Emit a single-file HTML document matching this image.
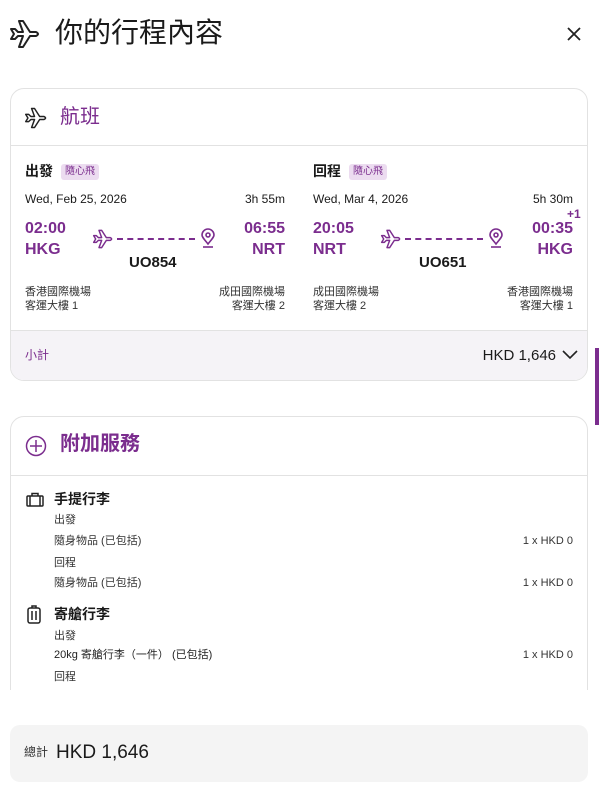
<!DOCTYPE html>
<html><head><meta charset="utf-8"><style>
*{margin:0;padding:0;box-sizing:border-box}
body{width:600px;height:787px;background:#fff;position:relative;overflow:hidden;font-family:"Liberation Sans","Noto Sans CJK TC",sans-serif;color:#1a1a1a}
.a{position:absolute;white-space:nowrap;line-height:1}
.p{color:#7b2d8e}
.card{position:absolute;left:10px;width:578px;border:1px solid #e2e2e2;border-radius:14px;background:#fff;overflow:hidden}
.badge{position:absolute;background:#ecdcf0;color:#7b2d8e;font-size:10px;padding:3px 4px;border-radius:3px;line-height:1}
.r{text-align:right}
</style></head><body>
<svg class="a" style="left:9px;top:19px" width="32" height="30" viewBox="0 0 32 30" fill="none" stroke="#222" stroke-width="2" stroke-linejoin="round"><path d="M2 10 L6 10 L9 13 L14 13 L10 2 L14 2 L21 13 L27 13 Q31 15 27 17 L21 17 L14 28 L10 28 L14 17 L9 17 L6 20 L2 20 L5 15 Z"/></svg>
<div class="a" style="left:55px;top:19px;font-size:28px">你的行程內容</div>
<svg class="a" style="left:567px;top:27px" width="14" height="14" stroke="#222" stroke-width="1.8"><path d="M1 1L13 13M13 1L1 13"/></svg>

<div class="card" style="top:88px;height:293px">
 <svg class="a" style="left:13px;top:18px" width="24" height="22" viewBox="0 0 32 30" fill="none" stroke="#222" stroke-width="2" stroke-linejoin="round"><path d="M2 10 L6 10 L9 13 L14 13 L10 2 L14 2 L21 13 L27 13 Q31 15 27 17 L21 17 L14 28 L10 28 L14 17 L9 17 L6 20 L2 20 L5 15 Z"/></svg>
 <div class="a p" style="left:49px;top:18px;font-size:20px">航班</div>
 <div class="a" style="left:0;top:56px;width:578px;height:1px;background:#e2e2e2"></div>

 <div class="a" style="left:14px;top:75px;font-size:14px;font-weight:bold">出發</div>
 <div class="badge" style="left:50px;top:75px">隨心飛</div>
 <div class="a" style="left:14px;top:104px;font-size:12px">Wed, Feb 25, 2026</div>
 <div class="a r" style="left:214px;width:60px;top:104px;font-size:12px">3h 55m</div>
 <div class="a p" style="left:14px;top:132px;font-size:16px;font-weight:bold">02:00</div>
 <div class="a p" style="left:14px;top:153px;font-size:16px;font-weight:bold">HKG</div>
 <div class="a p r" style="left:214px;width:60px;top:132px;font-size:16px;font-weight:bold">06:55</div>
 <div class="a p r" style="left:214px;width:60px;top:153px;font-size:16px;font-weight:bold">NRT</div>
 <svg class="a" style="left:81px;top:140px" width="22" height="20" viewBox="0 0 32 30" fill="none" stroke="#7b2d8e" stroke-width="2.2" stroke-linejoin="round"><path d="M2 10 L6 10 L9 13 L14 13 L10 2 L14 2 L21 13 L27 13 Q31 15 27 17 L21 17 L14 28 L10 28 L14 17 L9 17 L6 20 L2 20 L5 15 Z"/></svg>
 <div class="a" style="left:106px;top:149px;width:78px;border-top:2px dashed #7b2d8e"></div>
 <svg class="a" style="left:189px;top:139px" width="16" height="22" viewBox="0 0 16 22" fill="none" stroke="#7b2d8e" stroke-width="1.6"><path d="M8 16C4 11 2 9 2 7A6 6 0 0 1 14 7C14 9 12 11 8 16Z"/><circle cx="8" cy="7" r="2"/><path d="M3 19H13"/></svg>
 <div class="a" style="left:118px;top:166px;font-size:15px;font-weight:bold">UO854</div>
 <div class="a" style="left:14px;top:198px;font-size:11px;color:#333">香港國際機場</div>
 <div class="a" style="left:14px;top:212px;font-size:11px;color:#333">客運大樓 1</div>
 <div class="a r" style="left:174px;width:100px;top:198px;font-size:11px;color:#333">成田國際機場</div>
 <div class="a r" style="left:174px;width:100px;top:212px;font-size:11px;color:#333">客運大樓 2</div>

 <div class="a" style="left:302px;top:75px;font-size:14px;font-weight:bold">回程</div>
 <div class="badge" style="left:338px;top:75px">隨心飛</div>
 <div class="a" style="left:302px;top:104px;font-size:12px">Wed, Mar 4, 2026</div>
 <div class="a r" style="left:502px;width:60px;top:104px;font-size:12px">5h 30m</div>
 <div class="a p" style="left:556px;top:119px;font-size:12px;font-weight:bold">+1</div>
 <div class="a p" style="left:302px;top:132px;font-size:16px;font-weight:bold">20:05</div>
 <div class="a p" style="left:302px;top:153px;font-size:16px;font-weight:bold">NRT</div>
 <div class="a p r" style="left:502px;width:60px;top:132px;font-size:16px;font-weight:bold">00:35</div>
 <div class="a p r" style="left:502px;width:60px;top:153px;font-size:16px;font-weight:bold">HKG</div>
 <svg class="a" style="left:369px;top:140px" width="22" height="20" viewBox="0 0 32 30" fill="none" stroke="#7b2d8e" stroke-width="2.2" stroke-linejoin="round"><path d="M2 10 L6 10 L9 13 L14 13 L10 2 L14 2 L21 13 L27 13 Q31 15 27 17 L21 17 L14 28 L10 28 L14 17 L9 17 L6 20 L2 20 L5 15 Z"/></svg>
 <div class="a" style="left:394px;top:149px;width:78px;border-top:2px dashed #7b2d8e"></div>
 <svg class="a" style="left:477px;top:139px" width="16" height="22" viewBox="0 0 16 22" fill="none" stroke="#7b2d8e" stroke-width="1.6"><path d="M8 16C4 11 2 9 2 7A6 6 0 0 1 14 7C14 9 12 11 8 16Z"/><circle cx="8" cy="7" r="2"/><path d="M3 19H13"/></svg>
 <div class="a" style="left:408px;top:166px;font-size:15px;font-weight:bold">UO651</div>
 <div class="a" style="left:302px;top:198px;font-size:11px;color:#333">成田國際機場</div>
 <div class="a" style="left:302px;top:212px;font-size:11px;color:#333">客運大樓 2</div>
 <div class="a r" style="left:462px;width:100px;top:198px;font-size:11px;color:#333">香港國際機場</div>
 <div class="a r" style="left:462px;width:100px;top:212px;font-size:11px;color:#333">客運大樓 1</div>

 <div class="a" style="left:0;top:241px;width:578px;height:52px;background:#f5f3f7;border-top:1px solid #e2e2e2"></div>
 <div class="a p" style="left:14px;top:260px;font-size:12px">小計</div>
 <div class="a r" style="left:400px;width:145px;top:259px;font-size:15px">HKD 1,646</div>
 <svg class="a" style="left:551px;top:261px" width="16" height="10" fill="none" stroke="#222" stroke-width="1.6"><path d="M1 1L8 8L15 1"/></svg>
</div>
<div class="a" style="left:595px;top:348px;width:4px;height:77px;background:#7b2d8e"></div>

<div style="position:absolute;left:0;top:0;width:600px;height:690px;overflow:hidden">
<div class="card" style="top:416px;height:320px">
 <svg class="a" style="left:14px;top:18px" width="22" height="22" fill="none" stroke="#7b2d8e" stroke-width="1.5"><circle cx="11" cy="11" r="9.5"/><path d="M11 5V17M5 11H17"/></svg>
 <div class="a p" style="left:49px;top:17px;font-size:20px;font-weight:bold">附加服務</div>
 <div class="a" style="left:0;top:58px;width:578px;height:1px;background:#e2e2e2"></div>
 <svg class="a" style="left:15px;top:75px" width="18" height="15" fill="none" stroke="#222" stroke-width="1.5"><rect x="1" y="4" width="16" height="10" rx="1"/><path d="M6 4V1.5H12V4M4 4V14M14 4V14"/></svg>
 <div class="a" style="left:43px;top:75px;font-size:14px;font-weight:bold">手提行李</div>
 <div class="a" style="left:43px;top:98px;font-size:11px;color:#333">出發</div>
 <div class="a" style="left:43px;top:119px;font-size:11px;color:#333">隨身物品 (已包括)</div>
 <div class="a r" style="left:462px;width:100px;top:119px;font-size:11px;color:#333">1 x HKD 0</div>
 <div class="a" style="left:43px;top:141px;font-size:11px;color:#333">回程</div>
 <div class="a" style="left:43px;top:161px;font-size:11px;color:#333">隨身物品 (已包括)</div>
 <div class="a r" style="left:462px;width:100px;top:161px;font-size:11px;color:#333">1 x HKD 0</div>
 <svg class="a" style="left:16px;top:188px" width="14" height="20" fill="none" stroke="#222" stroke-width="1.5"><rect x="1" y="3" width="12" height="15" rx="2"/><path d="M5 3V1H9V3M5 6V15M9 6V15"/></svg>
 <div class="a" style="left:43px;top:190px;font-size:14px;font-weight:bold">寄艙行李</div>
 <div class="a" style="left:43px;top:214px;font-size:11px;color:#333">出發</div>
 <div class="a" style="left:43px;top:233px;font-size:11px;color:#222">20kg 寄艙行李（一件） (已包括)</div>
 <div class="a r" style="left:462px;width:100px;top:233px;font-size:11px;color:#333">1 x HKD 0</div>
 <div class="a" style="left:43px;top:255px;font-size:11px;color:#333">回程</div>
</div>
</div>

<div class="a" style="left:10px;top:725px;width:578px;height:57px;background:#f4f4f4;border-radius:10px"></div>
<div class="a" style="left:24px;top:746px;font-size:12px;color:#333">總計</div>
<div class="a" style="left:56px;top:743px;font-size:19px">HKD 1,646</div>
</body></html>
